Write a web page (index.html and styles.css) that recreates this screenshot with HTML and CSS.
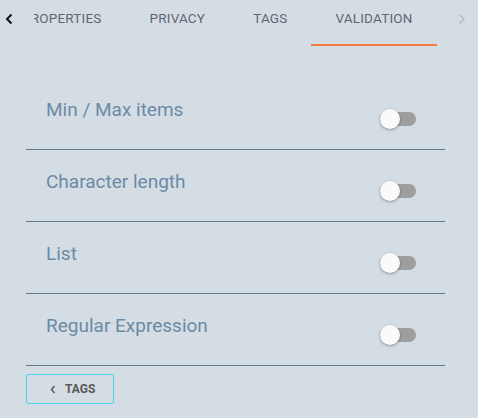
FILE: index.html
```html
<!DOCTYPE html>
<html>
<head>
<meta charset="utf-8">
<link rel="stylesheet" href="styles.css">
</head>
<body>
<div class="page">
  <div class="tabbar">
    <div class="arrow arrow-left">
      <svg width="8" height="12" viewBox="0 0 8 12"><path d="M6.5 1.5 L2 6 L6.5 10.5" fill="none" stroke="#111" stroke-width="2"/></svg>
    </div>
    <div class="viewport">
      <div class="tabs">
        <div class="tab">Properties</div>
        <div class="tab">Privacy</div>
        <div class="tab">Tags</div>
        <div class="tab active">Validation</div>
      </div>
    </div>
    <div class="arrow arrow-right">
      <svg width="8" height="12" viewBox="0 0 8 12"><path d="M1.5 1.5 L6 6 L1.5 10.5" fill="none" stroke="#b4bcc4" stroke-width="1.6"/></svg>
    </div>
  </div>
  <div class="list">
    <div class="row"><span class="label">Min / Max items</span><span class="toggle"><span class="track"></span><span class="knob"></span></span></div>
    <div class="row"><span class="label">Character length</span><span class="toggle"><span class="track"></span><span class="knob"></span></span></div>
    <div class="row"><span class="label">List</span><span class="toggle"><span class="track"></span><span class="knob"></span></span></div>
    <div class="row"><span class="label">Regular Expression</span><span class="toggle"><span class="track"></span><span class="knob"></span></span></div>
  </div>
  <div class="actions">
    <button class="back"><svg width="6" height="9" viewBox="0 0 6 9"><path d="M4.5 1 L1.5 4.5 L4.5 8" fill="none" stroke="#555" stroke-width="1.4"/></svg><span>Tags</span></button>
  </div>
</div>
</body>
</html>
```
FILE: styles.css
```css
html, body {
  margin: 0;
  padding: 0;
  background: #d5dde4;
}
.page {
  width: 478px;
  height: 418px;
  font-family: Roboto, "Liberation Sans", sans-serif;
  overflow: hidden;
}
.tabbar {
  display: flex;
  height: 46px;
}
.arrow {
  display: flex;
  align-items: flex-start;
  padding-top: 13px;
  box-sizing: border-box;
}
.arrow-left {
  width: 34px;
  padding-left: 5px;
}
.arrow-right {
  width: 32px;
  padding-left: 12px;
}
.viewport {
  flex: 1;
  overflow: hidden;
}
.tabs {
  display: flex;
  margin-left: -36px;
  height: 46px;
}
.tab {
  flex-shrink: 0;
  padding: 10px 24px 0;
  height: 46px;
  box-sizing: border-box;
  font-size: 13.5px;
  letter-spacing: 0.2px;
  line-height: 16px;
  text-transform: uppercase;
  color: #5f6770;
  white-space: nowrap;
}
.tab.active {
  border-bottom: 2px solid #f47b3e;
}
.list {
  margin: 32px 33px 0 26px;
}
.row {
  position: relative;
  height: 72px;
  box-sizing: border-box;
  border-bottom: 1px solid #5f7b92;
  padding: 20px 0 0 20px;
}
.label {
  display: block;
  font-size: 19px;
  line-height: 24px;
  color: #6b8aa6;
}
.toggle {
  position: absolute;
  right: 29px;
  top: 31px;
  width: 36px;
  height: 20px;
}
.track {
  position: absolute;
  left: 0;
  top: 3px;
  width: 36px;
  height: 14px;
  border-radius: 7px;
  background: #9e9e9e;
}
.knob {
  position: absolute;
  left: 0;
  top: 0;
  width: 20px;
  height: 20px;
  border-radius: 50%;
  background: #fafafa;
  box-shadow: 0 1px 3px rgba(0,0,0,0.35);
}
.actions {
  padding: 8px 0 0 26px;
}
.back {
  display: flex;
  align-items: center;
  gap: 9px;
  width: 88px;
  height: 30px;
  padding: 0 0 0 23px;
  box-sizing: border-box;
  background: transparent;
  border: 1px solid #4fd0ec;
  border-radius: 2px;
  font-family: Roboto, "Liberation Sans", sans-serif;
  font-size: 12px;
  font-weight: 700;
  color: #595959;
  text-transform: uppercase;
}
```
